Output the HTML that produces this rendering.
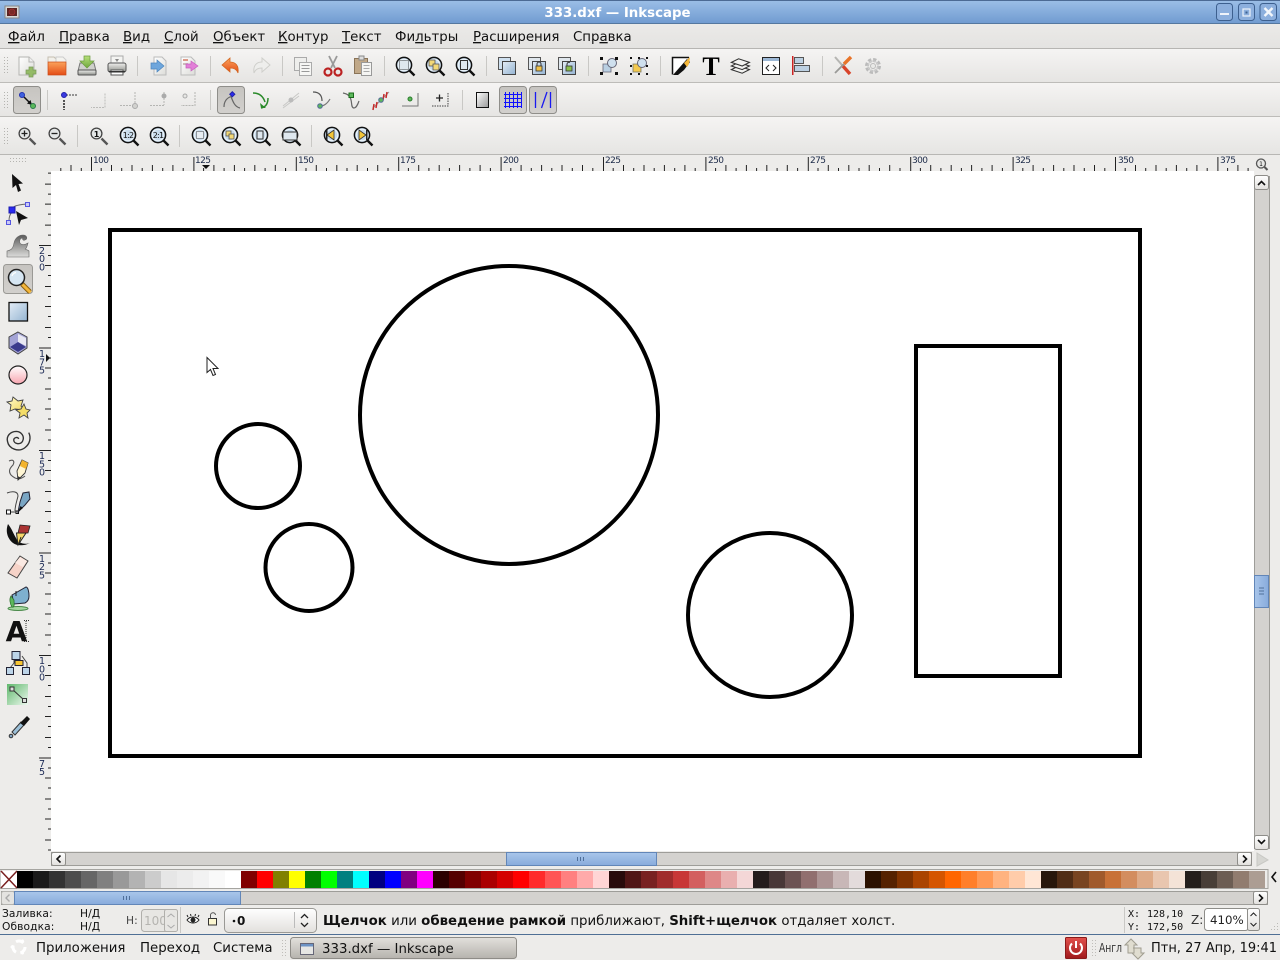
<!DOCTYPE html>
<html><head><meta charset="utf-8"><title>333.dxf — Inkscape</title>
<style>
html,body{margin:0;padding:0;width:1280px;height:960px;overflow:hidden;background:#edecea}
svg{display:block}
text{font-family:"DejaVu Sans","Liberation Sans",sans-serif;fill:#111}
.m{font-size:13.33px}
.u{text-decoration:underline}
.r{font-size:9px;letter-spacing:-.6px;fill:#1c2a48}
.v{font-size:9.5px;fill:#1c2a55;text-anchor:middle}
.s{font-size:10.67px;letter-spacing:.1px}
.mono{font-family:"DejaVu Sans Mono","Liberation Mono",monospace;font-size:10px}
</style></head><body>
<svg xmlns="http://www.w3.org/2000/svg" width="1280" height="960" viewBox="0 0 1280 960">
<defs>
<clipPath id="vc"><rect x="36" y="171" width="15" height="680"/></clipPath>
<linearGradient id="tb" x1="0" y1="0" x2="0" y2="1"><stop offset="0" stop-color="#9cbfe7"/><stop offset="1" stop-color="#6f9ad0"/></linearGradient>
<linearGradient id="bar" x1="0" y1="0" x2="0" y2="1"><stop offset="0" stop-color="#f5f4f3"/><stop offset="1" stop-color="#e6e5e3"/></linearGradient>
<linearGradient id="men" x1="0" y1="0" x2="0" y2="1"><stop offset="0" stop-color="#ebeae8"/><stop offset="1" stop-color="#e4e3e1"/></linearGradient>
<linearGradient id="bl" x1="0" y1="0" x2="1" y2="1"><stop offset="0" stop-color="#e4edf6"/><stop offset="1" stop-color="#94b4d2"/></linearGradient>
<linearGradient id="th" x1="0" y1="0" x2="0" y2="1"><stop offset="0" stop-color="#a9c6ea"/><stop offset="1" stop-color="#88abdc"/></linearGradient>
<linearGradient id="thv" x1="0" y1="0" x2="1" y2="0"><stop offset="0" stop-color="#a9c6ea"/><stop offset="1" stop-color="#88abdc"/></linearGradient>
<linearGradient id="btn" x1="0" y1="0" x2="0" y2="1"><stop offset="0" stop-color="#fff"/><stop offset="1" stop-color="#e2e0dd"/></linearGradient>
<linearGradient id="tog" x1="0" y1="0" x2="0" y2="1"><stop offset="0" stop-color="#c6c4c0"/><stop offset="1" stop-color="#d2d0cd"/></linearGradient>
<linearGradient id="task" x1="0" y1="0" x2="0" y2="1"><stop offset="0" stop-color="#e2e0dc"/><stop offset="1" stop-color="#b6b3ad"/></linearGradient>
<linearGradient id="or" x1="0" y1="0" x2="0" y2="1"><stop offset="0" stop-color="#fba35c"/><stop offset="1" stop-color="#e44c16"/></linearGradient>
<linearGradient id="gr" x1="0" y1="0" x2="0" y2="1"><stop offset="0" stop-color="#b8e07c"/><stop offset="1" stop-color="#6fa83c"/></linearGradient>
<linearGradient id="gy" x1="0" y1="0" x2="0" y2="1"><stop offset="0" stop-color="#f0f0ee"/><stop offset="1" stop-color="#8d8f8a"/></linearGradient>
<linearGradient id="wv" x1="0" y1="0" x2="0" y2="1"><stop offset="0" stop-color="#5a5a5a"/><stop offset="1" stop-color="#dcdcda"/></linearGradient>
<linearGradient id="gs" x1="0" y1="0" x2="1" y2="1"><stop offset="0" stop-color="#fff"/><stop offset="1" stop-color="#999"/></linearGradient>
<linearGradient id="pg" x1="0" y1="0" x2="1" y2="1"><stop offset="0" stop-color="#ffffff"/><stop offset="1" stop-color="#dcdcd8"/></linearGradient>
<linearGradient id="pink" x1="0" y1="0" x2="0" y2="1"><stop offset="0" stop-color="#fff"/><stop offset="1" stop-color="#f8a6b0"/></linearGradient>
<linearGradient id="yel" x1="0" y1="0" x2="1" y2="1"><stop offset="0" stop-color="#fffbd0"/><stop offset="1" stop-color="#f2d860"/></linearGradient>
<linearGradient id="pw" x1="0" y1="0" x2="0" y2="1"><stop offset="0" stop-color="#e2504c"/><stop offset="1" stop-color="#a01a1c"/></linearGradient>
<linearGradient id="gn" x1="0" y1="0" x2="1" y2="1"><stop offset="0" stop-color="#5fb86c"/><stop offset="1" stop-color="#eef8ef"/></linearGradient>
<path id="tk" d="M10.2 171v-3M20.5 171v-6M30.7 171v-3M41 171v-6M51.2 171v-3M61.4 171v-6M71.7 171v-3M81.9 171v-6M92.2 171v-3M.5 171v-14" stroke="#222" stroke-width="1" fill="none"/>
<path id="tv" d="M48 10.5h3M45 20.5h6M48 30.5h3M45 41.5h6M48 51.5h3M45 61.5h6M48 71.5h3M45 82.5h6M48 92.5h3M39 .5h12" stroke="#222" stroke-width="1" fill="none"/>
<g id="mg"><path d="M4.5 4.5l5 5" stroke="#111" stroke-width="2.4"/><circle r="7.6" cx="-1" cy="-1" fill="#c9dcec" stroke="#111" stroke-width="1.5"/><circle r="5.8" cx="-1" cy="-1" fill="none" stroke="#eef5fb" stroke-width="1"/></g>
<g id="mg2"><path d="M3.5 3.5l6 6" stroke="#555" stroke-width="2.4"/><circle r="5.4" cx="-1.5" cy="-1.5" fill="#e3e6e6" stroke="#444" stroke-width="1.3"/></g>
</defs>

<!-- title bar -->
<rect width="1280" height="24" fill="url(#tb)"/>
<rect width="1280" height="1" fill="#4c6a94"/>
<rect y="23" width="1280" height="1" fill="#55789f"/>
<rect x="5" y="6" width="14" height="12" fill="#d8d8d6" stroke="#888"/>
<rect x="7" y="8" width="10" height="8" fill="#5a2422"/><circle cx="12" cy="12" r="3" fill="#7a2a26" stroke="#a33" stroke-width=".7"/>
<text x="617.5" y="17" text-anchor="middle" style="font-size:13.33px;font-weight:bold;fill:#fff">333.dxf — Inkscape</text>
<g fill="#8cafdd" stroke="#3d608f" stroke-width="1"><rect x="1216.5" y="3.5" width="16" height="17" rx="3"/><rect x="1238.5" y="3.5" width="16" height="17" rx="3"/><rect x="1260" y="3.5" width="16.5" height="17" rx="3"/></g>
<rect x="1220" y="13" width="9" height="2" fill="#eef3fa"/>
<rect x="1243" y="9" width="7" height="7" fill="none" stroke="#eef3fa" stroke-width="1.2"/><rect x="1245.5" y="11.5" width="2" height="2" fill="#3d608f"/>
<path d="M1264.5 8l8 8M1272.5 8l-8 8" stroke="#f2f6fb" stroke-width="2.4"/>

<!-- menu -->
<rect y="24" width="1280" height="24" fill="url(#men)"/>
<rect y="48" width="1280" height="1" fill="#b6b5b2"/>
<text class="m" x="8" y="41"><tspan class="u">Ф</tspan>айл</text>
<text class="m" x="59" y="41"><tspan class="u">П</tspan>равка</text>
<text class="m" x="123" y="41"><tspan class="u">В</tspan>ид</text>
<text class="m" x="164" y="41"><tspan class="u">С</tspan>лой</text>
<text class="m" x="213" y="41"><tspan class="u">О</tspan>бъект</text>
<text class="m" x="278" y="41"><tspan class="u">К</tspan>онтур</text>
<text class="m" x="342" y="41"><tspan class="u">Т</tspan>екст</text>
<text class="m" x="395" y="41">Фи<tspan class="u">л</tspan>ьтры</text>
<text class="m" x="473" y="41"><tspan class="u">Р</tspan>асширения</text>
<text class="m" x="573" y="41">Спр<tspan class="u">а</tspan>вка</text>

<!-- toolbars -->
<rect y="49" width="1280" height="33" fill="url(#bar)"/><rect y="82" width="1280" height="1" fill="#bdbcb9"/>
<rect y="83" width="1280" height="33" fill="url(#bar)"/><rect y="116" width="1280" height="1" fill="#bdbcb9"/>
<rect y="117" width="1280" height="37" fill="url(#bar)"/><rect y="154" width="1280" height="1" fill="#b8b7b4"/>
<rect y="155" width="1280" height="780" fill="#edecea"/>
<!-- grips -->
<g fill="#b5b4b0"><path d="M4 57h1v1h-1zM7 57h1v1h-1zM4 60h1v1h-1zM7 60h1v1h-1zM4 63h1v1h-1zM7 63h1v1h-1zM4 66h1v1h-1zM7 66h1v1h-1zM4 69h1v1h-1zM7 69h1v1h-1zM4 72h1v1h-1zM7 72h1v1h-1z"/>
<path d="M4 92h1v1h-1zM7 92h1v1h-1zM4 95h1v1h-1zM7 95h1v1h-1zM4 98h1v1h-1zM7 98h1v1h-1zM4 101h1v1h-1zM7 101h1v1h-1zM4 104h1v1h-1zM7 104h1v1h-1zM4 107h1v1h-1zM7 107h1v1h-1z"/>
<path d="M4 128h1v1h-1zM7 128h1v1h-1zM4 131h1v1h-1zM7 131h1v1h-1zM4 134h1v1h-1zM7 134h1v1h-1zM4 137h1v1h-1zM7 137h1v1h-1zM4 140h1v1h-1zM7 140h1v1h-1zM4 143h1v1h-1zM7 143h1v1h-1z"/></g>
<!-- separators -->
<g fill="#c9c8c5">
<rect x="137" y="56" width="1" height="20"/><rect x="210" y="56" width="1" height="20"/><rect x="282" y="56" width="1" height="20"/><rect x="384" y="56" width="1" height="20"/><rect x="486" y="56" width="1" height="20"/><rect x="588" y="56" width="1" height="20"/><rect x="660" y="56" width="1" height="20"/><rect x="822" y="56" width="1" height="20"/>
<rect x="47" y="90" width="1" height="20"/><rect x="210" y="90" width="1" height="20"/><rect x="462" y="90" width="1" height="20"/>
<rect x="77" y="125" width="1" height="22"/><rect x="179" y="125" width="1" height="22"/><rect x="311" y="125" width="1" height="22"/>
</g>

<!-- toolbar 1 icons -->
<g transform="translate(27,66)"><path d="M-8-9h10l5 5v13h-15z" fill="url(#pg)" stroke="#b5b5b2"/><path d="M2-9v5h5" fill="#eee" stroke="#b5b5b2"/><path d="M2 1h4v3h3v4h-3v3h-4v-3h-3v-4h3z" fill="#94bb66" stroke="#7a9a5a" stroke-width=".7"/></g>
<g transform="translate(57,66)"><path d="M-9-4v-5h6l2 2h6v3" fill="#f2f0ea" stroke="#c5beb0"/><path d="M-1-9h7l3 3v4h-10z" fill="#f4f3ef" stroke="#ccc"/><rect x="-9" y="-4" width="18" height="13" fill="url(#or)" stroke="#c94a18" stroke-width=".7"/></g>
<g transform="translate(87,66)"><path d="M-7-3l-2 8h18l-2-8z" fill="#cfd0cc" stroke="#777"/><rect x="-9" y="4" width="18" height="5" rx="1" fill="url(#gy)" stroke="#555"/><path d="M-3-10h6v5h4l-7 7-7-7h4z" fill="url(#gr)" stroke="#6a9a3c" stroke-width=".7"/></g>
<g transform="translate(117,66)"><rect x="-6" y="-10" width="12" height="8" fill="#f4f4f2" stroke="#aaa"/><path d="M-2-7h4l-2 3z" fill="#888"/><rect x="-9" y="-3" width="18" height="9" rx="2" fill="url(#gy)" stroke="#555"/><rect x="-6" y="4" width="12" height="5" fill="#fff" stroke="#555"/><rect x="-8" y="5" width="16" height="1.5" fill="#333"/></g>
<g transform="translate(159,66)"><path d="M-5-9h8l4 4v14h-12z" fill="url(#pg)" stroke="#bbb"/><path d="M-9-3h6v-3l7 6-7 6v-3h-6z" fill="#6ea6dc" stroke="#4d85bd" stroke-width=".7" transform="translate(1,0)"/></g>
<g transform="translate(189,66)"><path d="M-8-9h10l4 4v14h-14z" fill="url(#pg)" stroke="#bbb"/><rect x="-6" y="-7" width="5" height="2" fill="#d98"/><rect x="-6" y="-3" width="5" height="2" fill="#cbb"/><path d="M-3-2h5v-3l7 5-7 5v-3h-5z" fill="#e27fd8" stroke="#c65fbd" stroke-width=".7"/></g>
<g transform="translate(231,66)"><path d="M-9-1l8-7v4c6 0 9 4 8 11-1-3-3-5-8-5v4z" fill="url(#or)" stroke="#d2651f" stroke-width=".8"/></g>
<g transform="translate(261,66)"><path d="M9-1l-8-7v4c-6 0-9 4-8 11 1-3 3-5 8-5v4z" fill="#eeeeec" stroke="#cfcfcb" stroke-width="1"/></g>
<g transform="translate(303,66)" stroke="#aaa" fill="#eeeeec"><rect x="-8.5" y="-8.5" width="12" height="13"/><rect x="-3.5" y="-3.5" width="12" height="13" fill="#f6f6f4"/><path d="M-1.5-.5h8M-1.5 2.5h8M-1.5 5.5h8" fill="none" stroke="#999"/></g>
<g transform="translate(333,66)"><path d="M-4-10l6 12M4-10l-6 12" stroke="#999" stroke-width="1.8"/><circle cx="-5" cy="6" r="3.5" fill="none" stroke="#b22" stroke-width="2.2"/><circle cx="5" cy="6" r="3.5" fill="none" stroke="#b22" stroke-width="2.2"/></g>
<g transform="translate(363,66)"><rect x="-8.5" y="-7.5" width="13" height="15" fill="#c0a888" stroke="#8a7458"/><rect x="-4" y="-10" width="5" height="4" fill="#ddd" stroke="#888"/><rect x="-1.5" y="-3.5" width="10" height="13" fill="#f5f5f3" stroke="#999"/><path d="M.5-.5h6M.5 2.5h6M.5 5.5h6" stroke="#aaa"/></g>
<g transform="translate(405,66)"><use href="#mg"/><rect x="-5.5" y="-5.5" width="9" height="9" fill="#dfe8ef" stroke="#444" stroke-dasharray="1 1"/></g>
<g transform="translate(435,66)"><use href="#mg"/><rect x="-6" y="-6" width="6" height="6" fill="#f3d977" stroke="#555" stroke-width=".8"/><rect x="-2" y="-2" width="6" height="6" fill="#f3d977" stroke="#555" stroke-width=".8"/></g>
<g transform="translate(465,66)"><use href="#mg"/><rect x="-4.5" y="-5.5" width="7" height="9" fill="#dfe8ef" stroke="#333"/></g>
<g transform="translate(507,66)"><rect x="-8.5" y="-8.5" width="12" height="12" fill="#cfe0ef" stroke="#555"/><rect x="-4.5" y="-4.5" width="13" height="13" fill="url(#bl)" stroke="#444"/></g>
<g transform="translate(537,66)"><rect x="-8.5" y="-8.5" width="12" height="12" fill="#dfe6ec" stroke="#555"/><rect x="-4.5" y="-4.5" width="13" height="13" fill="url(#bl)" stroke="#444"/><rect x="-1" y="0" width="6" height="5" fill="#f0c24a" stroke="#333" stroke-width=".8"/><path d="M0 0v-2a2 2 0 0 1 4 0v2" fill="none" stroke="#333"/></g>
<g transform="translate(567,66)"><rect x="-8.5" y="-8.5" width="12" height="12" fill="#dfe6ec" stroke="#555"/><rect x="-4.5" y="-4.5" width="13" height="13" fill="url(#bl)" stroke="#444"/><rect x="-1" y="0" width="6" height="5" fill="#8cc04c" stroke="#333" stroke-width=".8"/><path d="M0 0v-2a2 2 0 0 1 3-1.5" fill="none" stroke="#333"/></g>
<g transform="translate(609,66)"><path d="M-6-2h8v8h-8z" fill="#b9cfe2" stroke="#667" stroke-width=".8"/><circle cx="3" cy="-3" r="4.5" fill="#cfe0ee" stroke="#667"/><path d="M-9-9h3v3h-3zM6-9h3v3h-3zM-9 6h3v3h-3zM6 6h3v3h-3z" fill="#111"/></g>
<g transform="translate(639,66)"><path d="M-6-2h8v8h-8z" fill="#f3c94e" stroke="#776" stroke-width=".8"/><circle cx="3" cy="-3" r="4.5" fill="#cfe0ee" stroke="#667"/><path d="M-9-9h2v2h-2zM7-9h2v2h-2zM-9 7h2v2h-2zM7 7h2v2h-2zM-1-9h2v2h-2zM-9-1h2v2h-2zM7-1h2v2h-2zM-1 7h2v2h-2z" fill="#111"/></g>
<g transform="translate(681,66)"><path d="M-8.5 8.5V-8.5H8" fill="#fff" stroke="#111" stroke-width="1.5"/><path d="M-8 9L6-7l3 3L3 4-3 9z" fill="#111"/><path d="M3-3L9-9l-1 7-2 3z" fill="#f6b83a"/></g>
<text x="711" y="75" text-anchor="middle" style="font-family:'Liberation Serif',serif;font-size:26px;font-weight:bold;fill:#000">T</text>
<g transform="translate(741,66) scale(1.2)" fill="#f2f2f0" stroke="#333" stroke-width=".9"><path d="M-8 3l6-3 9 3-6 3z"/><path d="M-8 0l6-3 9 3-6 3z"/><path d="M-8-3l6-3 9 3-6 3z"/></g>
<g transform="translate(771,66)"><rect x="-8.5" y="-8.5" width="17" height="17" fill="#fff" stroke="#222"/><rect x="-8" y="-8" width="16" height="3" fill="#9cb8d6"/><path d="M-2 -1l-3 3 3 3M2-1l3 3-3 3" fill="none" stroke="#222"/></g>
<g transform="translate(801,66)"><rect x="-9" y="-10" width="1.5" height="19" fill="#c22"/><rect x="-6.5" y="-8.5" width="9" height="6" fill="#bcd0e2" stroke="#555"/><rect x="-6.5" y="-.5" width="15" height="6" fill="#bcd0e2" stroke="#555"/></g>
<g transform="translate(843,66)"><path d="M-8-9l7 8" stroke="#b5b5b2" stroke-width="2"/><path d="M-1-1l8 9" stroke="#d8442a" stroke-width="3.4"/><path d="M8-9L1-2" stroke="#e8742a" stroke-width="3.4"/><path d="M1-2L-8 7" stroke="#9a9a97" stroke-width="1.8"/></g>
<g transform="translate(873,66)" fill="none" stroke="#bbb"><circle r="6" stroke-width="4" stroke-dasharray="3 1.7"/><circle r="5" stroke="#ccc" stroke-width="1"/><circle r="2.5" fill="#e9e9e7"/></g>

<!-- toolbar 2 -->
<g fill="url(#tog)" stroke="#8f8e8a"><rect x="13.5" y="86.5" width="27" height="27" rx="3"/><rect x="217.5" y="86.5" width="27" height="27" rx="3"/><rect x="499.5" y="86.5" width="27" height="27" rx="3"/><rect x="529.5" y="86.5" width="27" height="27" rx="3"/></g>
<g transform="translate(27,100)"><path d="M-5-5L4 4" stroke="#111" stroke-width="1.5"/><path d="M5 5L0 3.5 3.5 0z" fill="#111"/><circle cx="-5" cy="-5" r="2.5" fill="#3e62e0" stroke="#2230b0"/><circle cx="6" cy="6" r="2.5" fill="#5cb85c" stroke="#2a7a4a"/></g>
<g transform="translate(64,100)"><path d="M0 0V10" stroke="#222" stroke-dasharray="2 1" stroke-width="1.5"/><path d="M2-5H14" stroke="#777" stroke-dasharray="2 1" stroke-width="1.5"/><circle cy="-5" r="2.5" fill="#3a3ae0" stroke="#2222aa"/></g>
<path d="M105 93.5v14h-14" fill="none" stroke="#bcbcb9" stroke-dasharray="2 1"/>
<path d="M135 92v13M120 105.5h12" stroke="#b5b5b2" stroke-dasharray="2 1" fill="none"/><circle cx="135" cy="106" r="2.5" fill="#d2d2cf" stroke="#aaa"/>
<path d="M164 92v13M150 105.5h14" stroke="#b5b5b2" stroke-dasharray="2 1" fill="none"/><circle cx="164" cy="96" r="2.5" fill="#aaa"/>
<path d="M195 92v13.5h-14" stroke="#b5b5b2" stroke-dasharray="2 1" fill="none"/><circle cx="185" cy="96" r="2" fill="#e6e6e4" stroke="#aaa"/>
<g transform="translate(231,100)"><path d="M-7 7C-7 1-4-2 0-3.5M0-3.5C2 2 4 7 9 8" fill="none" stroke="#666" stroke-width="1.2"/><rect x="-.5" y="-7.5" width="3.6" height="3.6" fill="#2c2cf0" stroke="#2222aa" transform="rotate(45 1.3 -5.7)"/></g>
<g transform="translate(261,100)"><path d="M-8-7C-2-7 2-4 4 2" fill="none" stroke="#2a8a2a" stroke-width="1.5"/><path d="M7-2C7 3 5 7 0 8" fill="none" stroke="#2a8a2a" stroke-width="1.5"/><path d="M-1 3L5 8 0 8" fill="#2a8a2a"/></g>
<g transform="translate(291,100)"><path d="M-8 6L8-7M-8 8L8-4" stroke="#c8c8c6" fill="none"/><circle r="2.5" fill="#bbb"/></g>
<g transform="translate(321,100)"><path d="M-8-8C-1-8 1-4 1 1" fill="none" stroke="#555" stroke-width="1.2"/><path d="M-3 7C3 6 6 4 9-1" fill="none" stroke="#777" stroke-width="1.2"/><circle cx="-1" cy="6" r="2.3" fill="#5cb85c" stroke="#556a9a"/></g>
<g transform="translate(351,100)"><path d="M-8-7C-3-6-1-4 0 0 1 3 0 8 3 8 5 8 7 4 8 1" fill="none" stroke="#666" stroke-width="1.2"/><rect x="-2" y="-7" width="4.5" height="4.5" fill="#5cb85c" stroke="#1a6a1a"/></g>
<g transform="translate(381,100)"><path d="M-8 8L8-8" stroke="#999"/><path d="M-7 4l-1 6M-4 2l-1 6M3-6l-1 6M6-8l-1 6" stroke="#c82a2a" stroke-width="1.5"/><circle r="2.3" fill="#5cb85c" stroke="#556a9a"/></g>
<g transform="translate(410,100)"><path d="M8-7V6H-8" fill="none" stroke="#777"/><circle cx="0" cy="-1" r="2" fill="#5cb85c" stroke="#2a7a2a"/></g>
<g transform="translate(440,100)"><path d="M-4-2H3M-.5-5.5V1.5" stroke="#222" stroke-width="1.3"/><path d="M8-7V6H-8" fill="none" stroke="#444" stroke-dasharray="1.5 1"/></g>
<g transform="translate(482,100)"><rect x="-5.5" y="-7.5" width="12" height="15" fill="url(#gs)" stroke="#111"/></g>
<g transform="translate(513,100)" stroke="#1010ff" stroke-width="1"><path d="M-7.5-8v16M-3.5-8v16M.5-8v16M4.5-8v16M8.5-8v16M-9-5.500H9M-9-1.500H9M-9 2.500H9M-9 6.500H9"/></g>
<g transform="translate(543,100)" stroke="#1a1af0" stroke-width="1.3"><path d="M-7.5-8V8M7.5-8V8M-1.5 8L4-8"/></g>

<!-- toolbar 3 -->
<g transform="translate(26,135)"><use href="#mg2"/><path d="M-4.5-1.5h6M-1.5-4.5v6" stroke="#222" stroke-width="1.3"/></g>
<g transform="translate(56,135)"><use href="#mg2"/><path d="M-4.5-1.5h6" stroke="#222" stroke-width="1.3"/></g>
<g transform="translate(98,135)"><use href="#mg2"/><text x="-1.5" y="2" text-anchor="middle" style="font-size:8px;font-weight:bold">1</text></g>
<g transform="translate(129,136)"><use href="#mg"/><text x="-1" y="2" text-anchor="middle" style="font-size:8px;letter-spacing:-.8px">1:2</text></g>
<g transform="translate(159,136)"><use href="#mg"/><text x="-1" y="2" text-anchor="middle" style="font-size:8px;letter-spacing:-.8px">2:1</text></g>
<g transform="translate(201,136)"><use href="#mg"/><rect x="-4.5" y="-4.5" width="7" height="7" fill="#e8eef3" stroke="#444" stroke-dasharray="1 1"/></g>
<g transform="translate(231,136)"><use href="#mg"/><rect x="-5" y="-5" width="5" height="5" fill="#f3d977" stroke="#555" stroke-width=".8"/><rect x="-2" y="-2" width="5" height="5" fill="#f3d977" stroke="#555" stroke-width=".8"/></g>
<g transform="translate(261,136)"><use href="#mg"/><rect x="-4" y="-5" width="6" height="8" fill="#dfe8ef" stroke="#333"/></g>
<g transform="translate(291,136)"><use href="#mg"/><rect x="-8" y="-4" width="14" height="8" fill="#dfe8ef" stroke="#333"/></g>
<g transform="translate(333,136)"><use href="#mg"/><path d="M-6-1L1-6V4z" fill="#f3c63a" stroke="#333" stroke-width=".8"/><rect x="-7" y="-6" width="1.5" height="10" fill="#222"/></g>
<g transform="translate(363,136)"><use href="#mg"/><path d="M3-1L-4-6V4z" fill="#f3c63a" stroke="#333" stroke-width=".8"/><rect x="3" y="-6" width="1.5" height="10" fill="#222"/></g>

<!-- canvas -->
<rect x="51" y="171" width="1203" height="680" fill="#fff"/>
<g fill="none" stroke="#000" stroke-width="4">
<rect x="110" y="230" width="1030" height="526"/>
<circle cx="509" cy="415" r="149"/>
<circle cx="258" cy="466" r="42"/>
<circle cx="309" cy="567.5" r="43.5"/>
<circle cx="770" cy="615" r="82"/>
<rect x="916" y="346" width="144" height="330"/>
</g>
<path d="M207 357.5v15l3.500-3 2.500 6 2.500-1-2.500-6h5z" fill="#fff" stroke="#222" stroke-width="1"/>

<!-- horizontal ruler -->
<rect x="0" y="155" width="1280" height="16" fill="#edecea"/>
<use href="#tk" x="-10.9"/><use href="#tk" x="91"/><use href="#tk" x="193.4"/><use href="#tk" x="295.8"/><use href="#tk" x="398.2"/><use href="#tk" x="500.6"/><use href="#tk" x="603"/><use href="#tk" x="705.4"/><use href="#tk" x="807.8"/><use href="#tk" x="910.2"/><use href="#tk" x="1012.6"/><use href="#tk" x="1115"/><use href="#tk" x="1217.4"/>
<rect x="0" y="155" width="51" height="17" fill="#edecea"/>
<g fill="#b5b4b0"><path d="M10 158h1v1h-1zM13 158h1v1h-1zM16 158h1v1h-1zM19 158h1v1h-1zM22 158h1v1h-1zM25 158h1v1h-1zM10 161h1v1h-1zM13 161h1v1h-1zM16 161h1v1h-1zM19 161h1v1h-1zM22 161h1v1h-1zM25 161h1v1h-1z"/></g>
<rect x="1250" y="155" width="30" height="16" fill="#edecea"/>
<text class="r" x="93" y="163">100</text><text class="r" x="195" y="163">125</text><text class="r" x="298" y="163">150</text><text class="r" x="400" y="163">175</text><text class="r" x="503" y="163">200</text><text class="r" x="605" y="163">225</text><text class="r" x="708" y="163">250</text><text class="r" x="810" y="163">275</text><text class="r" x="912" y="163">300</text><text class="r" x="1015" y="163">325</text><text class="r" x="1118" y="163">350</text><text class="r" x="1220" y="163">375</text>
<path d="M202 165h8l-4 4z" fill="#111"/>
<!-- vertical ruler -->
<rect x="36" y="171" width="15" height="680" fill="#edecea"/>
<g clip-path="url(#vc)"><use href="#tv" y="142.6"/><use href="#tv" y="245"/><use href="#tv" y="347.5"/><use href="#tv" y="450"/><use href="#tv" y="552.5"/><use href="#tv" y="655"/><use href="#tv" y="757.5"/></g>
<text class="v" x="42" y="254">2</text><text class="v" x="42" y="262">0</text><text class="v" x="42" y="270.5">0</text>
<text class="v" x="42" y="357">1</text><text class="v" x="42" y="365.5">7</text><text class="v" x="42" y="373.5">5</text>
<text class="v" x="42" y="459">1</text><text class="v" x="42" y="467.5">5</text><text class="v" x="42" y="475.5">0</text>
<text class="v" x="42" y="562">1</text><text class="v" x="42" y="570">2</text><text class="v" x="42" y="578.5">5</text>
<text class="v" x="42" y="664">1</text><text class="v" x="42" y="672.5">0</text><text class="v" x="42" y="680.5">0</text>
<text class="v" x="42" y="767">7</text><text class="v" x="42" y="775">5</text>
<path d="M46 354v8l4-4z" fill="#111"/>
<!-- ruler zoom icon -->
<g transform="translate(1261.5,164)"><circle cx="-.5" cy="-.5" r="4.5" fill="#e7e7e5" stroke="#555" stroke-width="1.3"/><path d="M3 3l3 3" stroke="#555" stroke-width="2"/><text x="-.5" y="2" text-anchor="middle" style="font-size:6px">1</text></g>

<!-- left tools -->
<rect x="3.5" y="264.5" width="29" height="29" rx="3" fill="url(#tog)" stroke="#9a9995"/>
<path d="M12 174l.5 14 3.500-3 2 7 3-1.500-2.500-6.500 4.500-.5z" fill="#111"/>
<g transform="translate(18,215)"><path d="M-6-4C-6-9-2-10 9-11M-9 6C-9 2-8-1-6-3" fill="none" stroke="#666"/><rect x="-9" y="-8" width="6" height="6" fill="#2a2af0" stroke="#1a1ab0"/><rect x="7.5" y="-12.5" width="4" height="4" fill="#c9c9f5" stroke="#5555e0"/><rect x="-11.5" y="5.5" width="4" height="4" fill="#c9c9f5" stroke="#5555e0"/><path d="M-3-4L9 3 2 5 0 10z" fill="#111" transform="translate(1,0)"/></g>
<path d="M7 257V251c4-1 6-2 7-8C15 238 19 235 23 235 27 235 28 239 25 240 23 241 22 239 23 238 20 238 19 241 20 243 21 245 25 245 28 243 27 247 26 249 25 249 27 250 28 250 29 251V257z" fill="url(#wv)" stroke="#666" stroke-width=".6"/>
<g transform="translate(18,279)"><path d="M4 5l8 8" stroke="#8a6010" stroke-width="5"/><path d="M4.5 5.5l8 8" stroke="#f4b63a" stroke-width="3"/><circle cx="-1.5" cy="-1.5" r="8" fill="#d6e6f3" stroke="#222" stroke-width="1.5"/><path d="M-6-3a5 5 0 0 1 4-3.5" fill="none" stroke="#fff" stroke-width="1.3"/></g>
<rect x="9" y="302.5" width="18.5" height="18.5" fill="url(#bl)" stroke="#111" stroke-width="1.3"/>
<g transform="translate(18,343)"><path d="M0-11L9-6V5L0 11-9 5V-6z" fill="#a4a4d6" stroke="#444" stroke-width="1"/><path d="M0-9L8-5V3L0-1z" fill="#e8e8f3"/><path d="M0-1L8 4 0 9-8 4z" fill="#3a3a8c"/></g>
<circle cx="18" cy="375" r="9" fill="url(#pink)" stroke="#222" stroke-width="1.2"/>
<g transform="translate(18,407)"><path d="M-5-10L0-6 5-7 3-1 6 3-3 2-8 4-7-2-11-5-6-6z" fill="url(#yel)" stroke="#444" stroke-width=".9"/><path d="M6-3L8 2 12 3 9 6 10 11 6 8 1 11 2 6-2 3 3 2z" fill="#f4dd68" stroke="#444" stroke-width=".9"/></g>
<path d="M19 440c-1-2-4-1-4 1 0 3 5 4 7 1 2-4-1-8-5-8-5 0-8 4-7 8 1 6 9 9 14 5 4-3 5-8 3-12" fill="none" stroke="#333" stroke-width="1.1" transform="translate(17.5,439.5) scale(1.25) translate(-18,-440.5)"/>
<path d="M9 461c4-2 6 0 4 4-3 3-5 6-2 10 3 3 8 6 14 1" fill="none" stroke="#555" stroke-width="1.1"/>
<path d="M18 480L17 471 22 460 28 463 25 473z" fill="#fff6d4" stroke="#333" stroke-width=".9"/>
<path d="M22 460L28 463 26 469 20 466z" fill="#f2b32e"/>
<path d="M18 480l-.5-4 3 1.500z" fill="#333"/>
<path d="M7 493C12 491 18 491 18 496 17 501 15 505 15 511" fill="none" stroke="#444"/>
<path d="M10 512H17" stroke="#444"/>
<rect x="6.5" y="510" width="4" height="4" fill="#fff" stroke="#111"/><rect x="16" y="511" width="2.5" height="2.5" fill="#fff" stroke="#111"/>
<path d="M18 512L20 502 23 493 29 492 30 499 25 505z" fill="#7aa6c4" stroke="#223"/>
<path d="M18 512l2.500-6 2.500 2z" fill="#111"/>
<path d="M8 524C5 532 8 539 13 543 17 546 24 546 30 543 24 545 18 543 16 538 13 533 12 529 8 524z" fill="#111"/>
<path d="M18 545L16.500 533H26z" fill="#f5d76a" stroke="#222"/>
<path d="M20 525L30 526 28 533H18z" fill="#a33" stroke="#222" stroke-width=".8"/>
<path d="M18 545L21 537" stroke="#222"/>
<g transform="translate(18,567)"><path d="M2-11L10-6-1 11-10 6z" fill="#f6d3c8" stroke="#444"/><path d="M2-10L9-6 5 0-3-4z" fill="#fbe9e2"/></g>
<g transform="translate(18,599)"><ellipse cx="0" cy="9.5" rx="10" ry="2" fill="#a5d8a0" stroke="#4a8a4a"/><path d="M-6-4L8-12C10-12 11-7 11-3 11 1 9 3 7 4L-4 5z" fill="#7eb0cf" stroke="#223"/><path d="M-7-3C-9 0-8 5-6 8-3 9-4 4-4 1z" fill="#5cb85c" stroke="#2a6a2a" stroke-width=".7"/><path d="M-2-8V-3" stroke="#222"/></g>
<text x="16.5" y="641" text-anchor="middle" style="font-weight:bold;font-size:28px;fill:#111">A</text>
<path d="M26 621v20M24 620.500h5M24 641.500h5" stroke="#333" stroke-dasharray="1 1" fill="none"/>
<g transform="translate(18,663)"><path d="M-4-4V0L-8 5M4-7L9 0V5" fill="none" stroke="#444"/><rect x="-6" y="-11.5" width="8" height="8" fill="#bcd4e8" stroke="#223"/><rect x="-3" y="-2.5" width="8" height="5" fill="#f6c533" stroke="#223"/><rect x="-11.5" y="4.5" width="7" height="7" fill="#bcd4e8" stroke="#223"/><rect x="4.5" y="4.5" width="7" height="7" fill="#bcd4e8" stroke="#223"/></g>
<g transform="translate(18,695)"><rect x="-11" y="-11" width="21" height="21" fill="url(#gn)"/><path d="M-6-6L6 5" stroke="#333"/><rect x="-8" y="-8" width="4" height="4" fill="#ddd" stroke="#333"/><rect x="4.5" y="3.5" width="4" height="4" fill="#ddd" stroke="#333"/></g>
<g transform="translate(18,727)"><path d="M-6 5L3-5 6-2-3 8z" fill="#9cc0d8" stroke="#333"/><path d="M2-4L9-11 12-8 6-1z" fill="#111"/><circle cx="-7" cy="9" r="1.8" fill="#7fa5c5" stroke="#333"/></g>

<!-- vertical scrollbar -->
<rect x="1254" y="171" width="26" height="680" fill="#edecea"/>
<rect x="1254.5" y="176.5" width="15" height="672" fill="#d4d2cf" stroke="#9e9d99"/>
<rect x="1254.5" y="175.5" width="14" height="14" rx="2" fill="url(#btn)" stroke="#8e8d89"/>
<path d="M1258 185l3.500-3.500 3.500 3.500" fill="none" stroke="#111" stroke-width="1.6"/>
<rect x="1254.5" y="835.5" width="14" height="14" rx="2" fill="url(#btn)" stroke="#8e8d89"/>
<path d="M1258 840l3.500 3.500 3.500-3.500" fill="none" stroke="#111" stroke-width="1.6"/>
<rect x="1254.5" y="575.5" width="14" height="32" fill="url(#thv)" stroke="#6286b8"/>
<path d="M1259 588h5M1259 591h5M1259 594h5" stroke="#4f6f9a"/>

<!-- horizontal scrollbar -->
<rect x="51.5" y="852.5" width="1200" height="13" fill="#d4d2cf" stroke="#9e9d99"/>
<rect x="51.5" y="852.5" width="14" height="13" rx="2" fill="url(#btn)" stroke="#8e8d89"/>
<path d="M60.5 855.5L57 859l3.500 3.500" fill="none" stroke="#111" stroke-width="1.6"/>
<rect x="1237.5" y="852.5" width="14" height="13" rx="2" fill="url(#btn)" stroke="#8e8d89"/>
<path d="M1243 855.5l3.500 3.500-3.500 3.500" fill="none" stroke="#111" stroke-width="1.6"/>
<rect x="506.5" y="852.5" width="150" height="13" fill="url(#th)" stroke="#6286b8"/>
<path d="M577.5 857v4M580.5 857v4M583.5 857v4" stroke="#4f6f9a"/>
<path d="M1257 853l11 7-11 6z" fill="#d6d6d2" stroke="#c8c8c4"/>

<!-- palette -->
<rect x="0" y="869.5" width="1268" height="19" fill="#edecea" stroke="#a5a4a0"/>
<rect x="1" y="871" width="16" height="17" fill="#fff"/><path d="M1 871l16 17M17 871L1 888" stroke="#7a2020" stroke-width="1.5"/>
<rect x="17" y="871" width="16" height="17" fill="#000"/><rect x="33" y="871" width="16" height="17" fill="#1a1a1a"/><rect x="49" y="871" width="16" height="17" fill="#333"/><rect x="65" y="871" width="16" height="17" fill="#4d4d4d"/><rect x="81" y="871" width="16" height="17" fill="#666"/><rect x="97" y="871" width="16" height="17" fill="#808080"/><rect x="113" y="871" width="16" height="17" fill="#999"/><rect x="129" y="871" width="16" height="17" fill="#b3b3b3"/><rect x="145" y="871" width="16" height="17" fill="#ccc"/><rect x="161" y="871" width="16" height="17" fill="#e6e6e6"/><rect x="177" y="871" width="16" height="17" fill="#ececec"/><rect x="193" y="871" width="16" height="17" fill="#f2f2f2"/><rect x="209" y="871" width="16" height="17" fill="#f9f9f9"/><rect x="225" y="871" width="16" height="17" fill="#fff"/>
<rect x="241" y="871" width="16" height="17" fill="#800000"/><rect x="257" y="871" width="16" height="17" fill="#f00"/><rect x="273" y="871" width="16" height="17" fill="#808000"/><rect x="289" y="871" width="16" height="17" fill="#ff0"/><rect x="305" y="871" width="16" height="17" fill="#008000"/><rect x="321" y="871" width="16" height="17" fill="#0f0"/><rect x="337" y="871" width="16" height="17" fill="#008080"/><rect x="353" y="871" width="16" height="17" fill="#0ff"/><rect x="369" y="871" width="16" height="17" fill="#000080"/><rect x="385" y="871" width="16" height="17" fill="#00f"/><rect x="401" y="871" width="16" height="17" fill="#800080"/><rect x="417" y="871" width="16" height="17" fill="#f0f"/>
<rect x="433" y="871" width="16" height="17" fill="#2b0000"/><rect x="449" y="871" width="16" height="17" fill="#500"/><rect x="465" y="871" width="16" height="17" fill="#800000"/><rect x="481" y="871" width="16" height="17" fill="#a00"/><rect x="497" y="871" width="16" height="17" fill="#d40000"/><rect x="513" y="871" width="16" height="17" fill="#f00"/><rect x="529" y="871" width="16" height="17" fill="#ff2a2a"/><rect x="545" y="871" width="16" height="17" fill="#f55"/><rect x="561" y="871" width="16" height="17" fill="#ff8080"/><rect x="577" y="871" width="16" height="17" fill="#faa"/><rect x="593" y="871" width="16" height="17" fill="#ffd5d5"/>
<rect x="609" y="871" width="16" height="17" fill="#280b0b"/><rect x="625" y="871" width="16" height="17" fill="#501616"/><rect x="641" y="871" width="16" height="17" fill="#782121"/><rect x="657" y="871" width="16" height="17" fill="#a02c2c"/><rect x="673" y="871" width="16" height="17" fill="#c83737"/><rect x="689" y="871" width="16" height="17" fill="#d35f5f"/><rect x="705" y="871" width="16" height="17" fill="#de8787"/><rect x="721" y="871" width="16" height="17" fill="#e9afaf"/><rect x="737" y="871" width="16" height="17" fill="#f4d7d7"/>
<rect x="753" y="871" width="16" height="17" fill="#241c1c"/><rect x="769" y="871" width="16" height="17" fill="#483737"/><rect x="785" y="871" width="16" height="17" fill="#6c5353"/><rect x="801" y="871" width="16" height="17" fill="#916f6f"/><rect x="817" y="871" width="16" height="17" fill="#ac9393"/><rect x="833" y="871" width="16" height="17" fill="#c8b7b7"/><rect x="849" y="871" width="16" height="17" fill="#e3dbdb"/>
<rect x="865" y="871" width="16" height="17" fill="#2b1100"/><rect x="881" y="871" width="16" height="17" fill="#520"/><rect x="897" y="871" width="16" height="17" fill="#803300"/><rect x="913" y="871" width="16" height="17" fill="#a40"/><rect x="929" y="871" width="16" height="17" fill="#d45500"/><rect x="945" y="871" width="16" height="17" fill="#f60"/><rect x="961" y="871" width="16" height="17" fill="#ff7f2a"/><rect x="977" y="871" width="16" height="17" fill="#f95"/><rect x="993" y="871" width="16" height="17" fill="#ffb380"/><rect x="1009" y="871" width="16" height="17" fill="#fca"/><rect x="1025" y="871" width="16" height="17" fill="#ffe6d5"/>
<rect x="1041" y="871" width="16" height="17" fill="#28170b"/><rect x="1057" y="871" width="16" height="17" fill="#502d16"/><rect x="1073" y="871" width="16" height="17" fill="#784421"/><rect x="1089" y="871" width="16" height="17" fill="#a05a2c"/><rect x="1105" y="871" width="16" height="17" fill="#c87137"/><rect x="1121" y="871" width="16" height="17" fill="#d38d5f"/><rect x="1137" y="871" width="16" height="17" fill="#deaa87"/><rect x="1153" y="871" width="16" height="17" fill="#e9c6af"/><rect x="1169" y="871" width="16" height="17" fill="#f4e3d7"/>
<rect x="1185" y="871" width="16" height="17" fill="#241f1c"/><rect x="1201" y="871" width="16" height="17" fill="#483e37"/><rect x="1217" y="871" width="16" height="17" fill="#6c5d53"/><rect x="1233" y="871" width="16" height="17" fill="#917c6f"/><rect x="1249" y="871" width="16" height="17" fill="#ac9d93"/>
<path d="M1276 872l-4 5 4 5" fill="none" stroke="#111" stroke-width="1.6"/>

<!-- palette scrollbar -->
<rect x="1.5" y="891.5" width="1266" height="13" fill="#d4d2cf" stroke="#9e9d99"/>
<rect x="1.5" y="891.5" width="13" height="13" rx="2" fill="#e4e3e0" stroke="#b5b4b0"/>
<path d="M9.5 894.5L6 898l3.500 3.500" fill="none" stroke="#aaa" stroke-width="1.4"/>
<rect x="14.5" y="891.5" width="226" height="13" fill="url(#th)" stroke="#6286b8"/>
<path d="M123.5 896v4M126.5 896v4M129.5 896v4" stroke="#4f6f9a"/>
<rect x="1253.5" y="891.5" width="14" height="13" rx="2" fill="url(#btn)" stroke="#8e8d89"/>
<path d="M1259 894.5l3.500 3.500-3.500 3.500" fill="none" stroke="#111" stroke-width="1.6"/>

<!-- status -->
<text class="s" x="2" y="917">Заливка:</text><text class="s" x="2" y="930">Обводка:</text>
<text class="s" x="80" y="917">Н/Д</text><text class="s" x="80" y="930">Н/Д</text>
<text class="s" x="126" y="924" style="fill:#444">Н:</text>
<rect x="141.5" y="909.5" width="36" height="22" rx="3" fill="#e7e6e3" stroke="#b0afab"/>
<text x="144" y="925" style="font-size:12px;fill:#b5b4b0">100</text>
<rect x="164.5" y="909.5" width="13" height="22" rx="2" fill="#e7e6e3" stroke="#b0afab"/>
<path d="M167.5 917l3.500-3 3.500 3M167.5 925l3.500 3 3.500-3" fill="none" stroke="#aaa"/>
<rect x="180" y="907" width="1" height="26" fill="#c9c8c5"/>
<g transform="translate(193,920)"><path d="M-6 0C-3-4 3-4 6 0 3 4-3 4-6 0z" fill="#fff" stroke="#222"/><circle r="2.5" fill="#222"/><path d="M-5-3l-1-2M-2-4l-.5-2M2-4l.5-2M5-3l1-2" stroke="#222"/></g>
<g transform="translate(213,920)"><rect x="-4.5" y="-1.5" width="8" height="6.5" fill="#fbf6d0" stroke="#333"/><path d="M-2.5-1.5v-3a2.500 2.500 0 0 1 5-.5" fill="none" stroke="#555"/></g>
<rect x="224.5" y="908.5" width="92" height="24" rx="4" fill="url(#btn)" stroke="#9a9995"/>
<rect x="294" y="912" width="1" height="16" fill="#bbb"/>
<path d="M301 918l3.500-3.500 3.500 3.500M301 923l3.500 3.500 3.500-3.500" fill="none" stroke="#222" stroke-width="1.3"/>
<circle cx="234" cy="921" r="1.3" fill="#111"/><text x="237" y="925" style="font-size:12px;font-weight:bold">0</text>
<text x="323" y="925" style="font-size:13.33px"><tspan font-weight="bold">Щелчок</tspan> или <tspan font-weight="bold">обведение рамкой</tspan> приближают, <tspan font-weight="bold">Shift+щелчок</tspan> отдаляет холст.</text>
<rect x="1124" y="907" width="1" height="26" fill="#c9c8c5"/>
<text class="mono" x="1128" y="917">X:</text><text class="mono" x="1147" y="917">128,10</text>
<text class="mono" x="1128" y="930">Y:</text><text class="mono" x="1147" y="930">172,50</text>
<text x="1191" y="924" style="font-size:12px;fill:#333">Z:</text>
<rect x="1204.5" y="908.5" width="44" height="22" rx="3" fill="#fff" stroke="#8e8d89"/>
<text x="1210" y="924" style="font-size:11.8px;fill:#222">410%</text>
<rect x="1247.5" y="908.5" width="12" height="22" rx="2" fill="url(#btn)" stroke="#8e8d89"/>
<path d="M1250.5 916l3-3 3 3M1250.5 923l3 3 3-3" fill="none" stroke="#222"/>
<g fill="#bbbab6"><rect x="1277" y="923" width="1" height="1"/><rect x="1274" y="926" width="1" height="1"/><rect x="1277" y="926" width="1" height="1"/><rect x="1271" y="929" width="1" height="1"/><rect x="1274" y="929" width="1" height="1"/><rect x="1277" y="929" width="1" height="1"/></g>

<!-- panel -->
<rect y="934" width="1280" height="1" fill="#4f6f95"/>
<rect y="935" width="1280" height="25" fill="#edecea"/>
<g transform="translate(19,947)"><circle r="6" fill="none" stroke="#fff" stroke-width="3" stroke-dasharray="8 4.5"/><circle cx="-7" cy="0" r="1.5" fill="#fff"/><circle cx="3.5" cy="-6" r="1.5" fill="#fff"/><circle cx="3.5" cy="6" r="1.5" fill="#fff"/></g>
<text x="36" y="952" style="font-size:13.33px">Приложения</text>
<text x="140" y="952" style="font-size:13.33px">Переход</text>
<text x="213" y="952" style="font-size:13.33px">Система</text>
<g fill="#bfbdb9"><rect x="282" y="940" width="1" height="1"/><rect x="285" y="940" width="1" height="1"/><rect x="282" y="943" width="1" height="1"/><rect x="285" y="943" width="1" height="1"/><rect x="282" y="946" width="1" height="1"/><rect x="285" y="946" width="1" height="1"/><rect x="282" y="949" width="1" height="1"/><rect x="285" y="949" width="1" height="1"/><rect x="282" y="952" width="1" height="1"/><rect x="285" y="952" width="1" height="1"/><rect x="282" y="955" width="1" height="1"/><rect x="285" y="955" width="1" height="1"/></g>
<rect x="290.5" y="937.5" width="226" height="21" rx="3" fill="url(#task)" stroke="#8e8c87"/>
<rect x="300.5" y="943.5" width="13" height="11" fill="#e6e6e4" stroke="#667"/><rect x="301" y="944" width="12" height="2.5" fill="#6c92c4"/>
<text x="322" y="953" style="font-size:13.33px">333.dxf — Inkscape</text>
<rect x="1065.5" y="937.5" width="21" height="21" rx="1" fill="url(#pw)" stroke="#8a1a1a"/>
<path d="M1072 943.5a6 6 0 1 0 8 0" fill="none" stroke="#fff" stroke-width="2"/><path d="M1076 941v7" stroke="#fff" stroke-width="2"/>
<g fill="#bfbdb9"><rect x="1092" y="940" width="1" height="1"/><rect x="1095" y="940" width="1" height="1"/><rect x="1092" y="943" width="1" height="1"/><rect x="1095" y="943" width="1" height="1"/><rect x="1092" y="946" width="1" height="1"/><rect x="1095" y="946" width="1" height="1"/><rect x="1092" y="949" width="1" height="1"/><rect x="1095" y="949" width="1" height="1"/><rect x="1092" y="952" width="1" height="1"/><rect x="1095" y="952" width="1" height="1"/><rect x="1092" y="955" width="1" height="1"/><rect x="1095" y="955" width="1" height="1"/></g>
<text x="1099" y="952" style="font-size:12px;fill:#333" textLength="23" lengthAdjust="spacingAndGlyphs">Англ</text>
<path d="M1125 945l6-6 6 6h-3v8h-6v-8zM1133 948h8v5h3l-6 6-6-6h1" fill="#e0ddd0" stroke="#a09d90"/>
<text x="1151" y="952" style="font-size:13.33px" textLength="126" lengthAdjust="spacingAndGlyphs">Птн, 27 Апр, 19:41</text>
</svg>
</body></html>
